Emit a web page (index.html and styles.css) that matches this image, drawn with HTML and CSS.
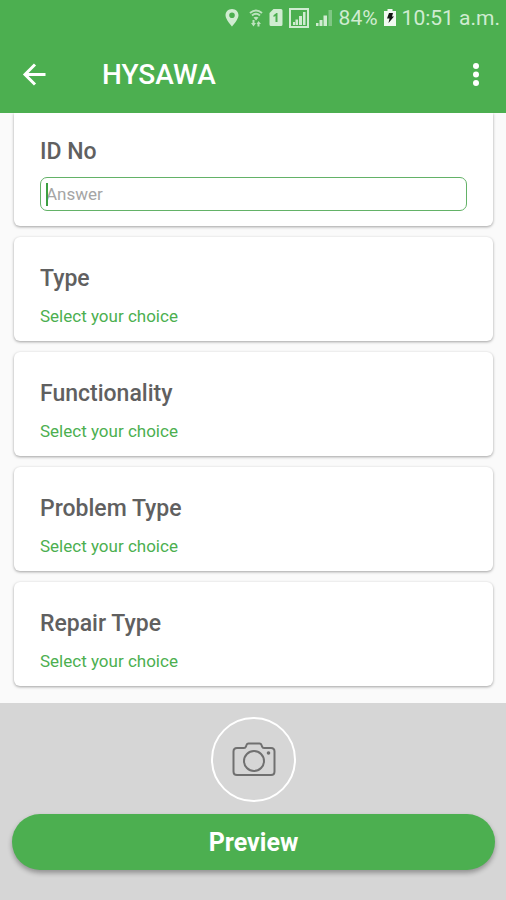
FILE: index.html
```html
<!DOCTYPE html>
<html lang="en">
<head>
  <meta charset="utf-8">
  <meta name="viewport" content="width=device-width, initial-scale=1">
  <title>HYSAWA</title>
  <link rel="stylesheet" href="styles.css">
</head>
<body>
  <div class="status-bar">
    <svg class="status-icon" width="14" height="18" viewBox="0 0 14 18" aria-hidden="true">
      <path fill-rule="evenodd" d="M7 0C3.200 0 .5 2.800.5 6.300.5 10.500 7 17.500 7 17.500s6.500-7 6.500-11.200C13.500 2.800 10.800 0 7 0zm0 3.500a2.800 2.800 0 1 1 0 5.600 2.800 2.800 0 0 1 0-5.600z"/>
    </svg>
    <svg class="status-icon wifi" width="14" height="18" viewBox="0 0 14 18" aria-hidden="true">
      <path class="wave" d="M1 4Q7-1 13 4M3 6.500Q7 3 11 6.500"/>
      <path d="M4.500 8.500Q7 7 9.500 8.500L7 11.500z"/>
      <path d="M5.500 11v3H7l-2.500 3.500L2 14h1.500v-3zM10.500 17.500V15H12l-2.500-3L7.500 15h1v2.500z"/>
    </svg>
    <svg class="status-icon" width="14" height="18" viewBox="0 0 14 18" aria-hidden="true">
      <path fill-rule="evenodd" d="M4.500 0H12q1.500 0 1.500 1.500v14Q13.500 17 12 17H2Q.5 17 .5 15.500V4zM4.500 6.200V8L6.500 7v6h2V4H7.400z"/>
    </svg>
    <svg class="status-icon" width="20" height="22" viewBox="0 0 20 22" aria-hidden="true">
      <path class="frame" d="M1 2h18v18H1z"/>
      <path d="M4 15h2v3H4zM6.500 12.500H9V18H6.500zM10 9h3v9h-3zM14 5h2.500v13H14z"/>
    </svg>
    <svg class="status-icon" width="18" height="18" viewBox="0 0 18 18" aria-hidden="true">
      <path d="M1 14h2.500v3H1zM4.500 11h3v6h-3zM8.500 6.500H12V17H8.500z"/>
      <path opacity=".4" d="M13.500 1H17v16h-3.500z"/>
    </svg>
    <span>84%</span>
    <svg class="status-icon" width="12" height="18" viewBox="0 0 12 18" aria-hidden="true">
      <path class="battery" d="M3.500 0h5v2H12v15H0V2h3.500z"/>
      <path class="bolt" d="M5 4h4L8 7.500h2L4.500 14l1-4.500H3z"/>
    </svg>
    <span>10:51 a.m.</span>
  </div>

  <header class="app-bar">
    <button class="icon-button" type="button" aria-label="Back">
      <svg width="24" height="24" viewBox="0 0 24 24" aria-hidden="true">
        <path class="arrow" d="M23.500 11.500H3M13 1.500L3 11.500l10 10"/>
      </svg>
    </button>
    <h1 class="app-title">HYSAWA</h1>
    <button class="icon-button" type="button" aria-label="More options">
      <svg width="24" height="24" viewBox="0 0 24 24" aria-hidden="true">
        <circle cx="12" cy="3" r="3"/><circle cx="12" cy="11.500" r="3"/><circle cx="12" cy="20" r="3"/>
      </svg>
    </button>
  </header>

  <form class="survey">
    <main class="cards">
      <section class="card card-first">
        <label class="card-title" for="id-no">ID No</label>
        <div class="answer">
          <input class="answer-input" id="id-no" type="text" placeholder="Answer">
        </div>
      </section>
      <section class="card">
        <label class="card-title" for="type">Type</label>
        <select class="choice" id="type"><option>Select your choice</option></select>
      </section>
      <section class="card">
        <label class="card-title" for="functionality">Functionality</label>
        <select class="choice" id="functionality"><option>Select your choice</option></select>
      </section>
      <section class="card">
        <label class="card-title" for="problem-type">Problem Type</label>
        <select class="choice" id="problem-type"><option>Select your choice</option></select>
      </section>
      <section class="card">
        <label class="card-title" for="repair-type">Repair Type</label>
        <select class="choice" id="repair-type"><option>Select your choice</option></select>
      </section>
    </main>

    <footer class="actions">
      <button class="camera" type="button" aria-label="Take photo">
        <svg width="44" height="36" viewBox="0 0 44 36" aria-hidden="true">
          <path d="M5 6h7q1.500 0 2-1.500l.5-1.500q.5-1.500 2-1.500h11q1.500 0 2 1.500l.5 1.500q.5 1.500 2 1.500h7q3.500 0 3.500 3.500v20q0 3.500-3.500 3.500H5q-3.500 0-3.500-3.500v-20Q1.500 6 5 6z"/>
          <circle cx="22" cy="19" r="10"/>
          <circle class="flash" cx="36.500" cy="11" r="1.800"/>
        </svg>
      </button>
      <button class="preview" type="button">Preview</button>
    </footer>
  </form>
</body>
</html>
```
FILE: styles.css
```css
:root {
  --green: #4caf50;
  --status: #d0ecd1;
}

* {
  box-sizing: border-box;
}

body {
  margin: 0;
  min-height: 100vh;
  display: flex;
  flex-direction: column;
  background: #fafafa;
  font-family: Roboto, "Liberation Sans", sans-serif;
}

button,
input,
select {
  font-family: inherit;
}

.status-bar {
  display: flex;
  align-items: center;
  justify-content: flex-end;
  gap: 6px;
  height: 36px;
  padding: 0 6px;
  background: var(--green);
  color: var(--status);
  font-size: 21px;
  line-height: 36px;
}

.status-icon {
  flex: none;
  fill: var(--status);
}

.status-icon:first-child {
  margin-right: 4px;
}

.wave,
.frame {
  fill: none;
  stroke: var(--status);
  stroke-width: 2;
}

.wifi {
  opacity: 0.85;
}

.battery {
  fill: #f1faf1;
}

.bolt {
  fill: #101510;
}

.app-bar {
  display: flex;
  align-items: center;
  height: 77px;
  padding: 0 18px 0 22px;
  background: var(--green);
  color: #fff;
}

.icon-button {
  display: flex;
  padding: 0;
  border: 0;
  background: none;
  fill: #fff;
}

.arrow {
  fill: none;
  stroke: #fff;
  stroke-width: 3;
}

.app-title {
  flex: 1;
  margin: 0 0 0 56px;
  font-size: 28px;
  font-weight: 500;
  line-height: 32px;
}

.survey {
  flex: 1;
  display: flex;
  flex-direction: column;
}

.cards {
  display: flex;
  flex-direction: column;
  gap: 11px;
  padding: 0 13px 17px 14px;
}

.card {
  display: flex;
  flex-direction: column;
  align-items: flex-start;
  padding: 28px 26px 13px;
  border-radius: 6px;
  background: #fff;
  box-shadow: 0 1px 3px rgba(0, 0, 0, 0.36);
}

.card-first {
  padding-top: 25px;
  padding-bottom: 15px;
  border-radius: 0 0 6px 6px;
  clip-path: inset(0 -6px -6px);
}

.card-title {
  color: #606060;
  font-size: 23px;
  font-weight: 500;
  line-height: 28px;
}

.answer {
  position: relative;
  width: 100%;
  margin-top: 11px;
}

.answer::before {
  content: "";
  position: absolute;
  top: 6px;
  left: 6px;
  width: 2px;
  height: 23px;
  background: #3c9f42;
}

.answer-input {
  display: block;
  width: 100%;
  height: 34px;
  padding: 0 5px;
  border: 1px solid #63b267;
  border-radius: 7px;
  outline: 0;
  background: #fff;
  font-size: 17px;
}

.answer-input::placeholder {
  color: #a5a5a5;
}

.choice {
  height: 24px;
  margin-top: 11px;
  padding: 0;
  border: 0;
  appearance: none;
  background: none;
  color: var(--green);
  font-size: 17px;
  line-height: 24px;
}

.actions {
  flex: 1;
  display: flex;
  flex-direction: column;
  align-items: center;
  gap: 12px;
  padding: 14px 11px 30px 12px;
  background: #d6d6d6;
}

.camera {
  display: flex;
  align-items: center;
  justify-content: center;
  width: 85px;
  height: 85px;
  padding: 0;
  border: 2px solid #fff;
  border-radius: 50%;
  background: none;
  fill: none;
  stroke: #707070;
  stroke-width: 2;
}

.flash {
  fill: #707070;
  stroke: none;
}

.preview {
  width: 100%;
  height: 56px;
  border: 0;
  border-radius: 28px;
  background: var(--green);
  box-shadow: 0 3px 5px rgba(0, 0, 0, 0.32);
  color: #fff;
  font-size: 25px;
  font-weight: 700;
}
```
